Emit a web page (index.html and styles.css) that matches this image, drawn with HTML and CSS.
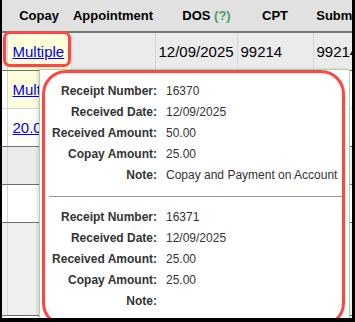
FILE: index.html
```html
<!DOCTYPE html>
<html lang="en">
<head>
    <meta charset="UTF-8">
    <title>Copay Receipts</title>
    <link rel="stylesheet" href="styles.css">
</head>
<body>
    <div class="frame">
        <table class="grid">
            <colgroup>
                <col class="c-gutter">
                <col class="c-copay">
                <col class="c-appt">
                <col class="c-dos">
                <col class="c-cpt">
                <col class="c-sub">
            </colgroup>
            <thead>
                <tr>
                    <th class="gutter"></th>
                    <th>Copay</th>
                    <th>Appointment</th>
                    <th class="dos">DOS <span class="hint">(?)</span></th>
                    <th>CPT</th>
                    <th>Submitted</th>
                </tr>
            </thead>
            <tbody>
                <tr class="shaded">
                    <td class="gutter"></td>
                    <td class="copay"><a href="#">Multiple</a></td>
                    <td></td>
                    <td>12/09/2025</td>
                    <td>99214</td>
                    <td>99214</td>
                </tr>
                <tr class="soft">
                    <td class="gutter"></td>
                    <td class="copay"><a href="#">Multiple</a></td>
                    <td></td>
                    <td></td>
                    <td></td>
                    <td></td>
                </tr>
                <tr>
                    <td class="gutter"></td>
                    <td><a href="#">20.00</a></td>
                    <td></td>
                    <td></td>
                    <td></td>
                    <td></td>
                </tr>
                <tr class="shaded">
                    <td class="gutter"></td>
                    <td></td>
                    <td></td>
                    <td></td>
                    <td></td>
                    <td></td>
                </tr>
                <tr>
                    <td class="gutter"></td>
                    <td></td>
                    <td></td>
                    <td></td>
                    <td></td>
                    <td></td>
                </tr>
                <tr class="shaded tall">
                    <td class="gutter"></td>
                    <td></td>
                    <td></td>
                    <td></td>
                    <td></td>
                    <td></td>
                </tr>
            </tbody>
        </table>

        <!-- highlight around the clicked link -->
        <div class="mark mark-link"></div>

        <!-- receipts popup -->
        <div class="popup">
            <dl class="receipt">
                <dt>Receipt Number:</dt><dd>16370</dd>
                <dt>Received Date:</dt><dd>12/09/2025</dd>
                <dt>Received Amount:</dt><dd>50.00</dd>
                <dt>Copay Amount:</dt><dd>25.00</dd>
                <dt>Note:</dt><dd>Copay and Payment on Account</dd>
            </dl>
            <hr class="split">
            <dl class="receipt">
                <dt>Receipt Number:</dt><dd>16371</dd>
                <dt>Received Date:</dt><dd>12/09/2025</dd>
                <dt>Received Amount:</dt><dd>25.00</dd>
                <dt>Copay Amount:</dt><dd>25.00</dd>
                <dt>Note:</dt><dd></dd>
            </dl>
            <div class="mark mark-popup"></div>
        </div>
    </div>
</body>
</html>
```

FILE: styles.css
```css
body {
    margin: 0;
    padding: 0;
    background: #ffffff;
    font-family: "Liberation Sans", Arial, sans-serif;
    color: #000;
}

.frame {
    position: relative;
    width: 355px;
    height: 322px;
    box-sizing: border-box;
    border-left: 2px solid #000;
    border-right: 3px solid #000;
    border-bottom: 4px solid #000;
    overflow: hidden;
    background: #fff;
}

/* Grid */
.grid {
    border-collapse: collapse;
    table-layout: fixed;
    width: 381px;
}

.c-gutter { width: 5px; }
.c-copay { width: 64px; }
.c-appt { width: 84px; }
.c-dos { width: 82px; }
.c-cpt { width: 76px; }
.c-sub { width: 70px; }

.grid th {
    height: 31px;
    padding: 0;
    background: #e1e1e1;
    border-bottom: 2px solid #777;
    font-size: 13px;
    font-weight: 700;
    text-align: center;
    white-space: nowrap;
    overflow: hidden;
}

.grid th.dos {
    padding-left: 21px;
}

.hint {
    color: #4f9a63;
}

.grid td {
    height: 37px;
    padding: 0 0 0 3px;
    border-bottom: 1px solid #6e6e6e;
    border-right: 1px solid #d6d6d6;
    font-size: 15px;
    white-space: nowrap;
    overflow: hidden;
}

.grid td.gutter {
    padding: 0;
}

.grid tr.soft td {
    border-bottom-color: #d6d6d6;
}

.grid tr.shaded td {
    background: #ebebeb;
}

.grid tr.tall td {
    height: 92px;
    background: #efefef;
}

.grid td.copay {
    background: #ffffdc;
}

.grid tr.shaded td.copay {
    background: #ffffdc;
}

.grid a {
    color: #0000ee;
    padding-left: 2px;
}

/* Popup */
.popup {
    position: absolute;
    left: 37px;
    top: 69px;
    width: 309px;
    height: 247px;
    padding-top: 11px;
    background: #fff;
    border: 1px solid #a9d49a;
    box-shadow: -2px 0 3px rgba(0, 0, 0, 0.12);
}

.receipt {
    display: grid;
    grid-template-columns: 108px 1fr;
    column-gap: 9px;
    margin: 0;
    padding-left: 9px;
    font-size: 12px;
    line-height: 21px;
    color: #333;
}

.receipt dt {
    font-weight: 700;
    text-align: right;
    white-space: nowrap;
}

.receipt dd {
    margin: 0;
    white-space: nowrap;
    min-height: 21px;
}

.split {
    margin: 10px 7px 10px 9px;
    border: 0;
    border-top: 1px solid #9a9a9a;
    height: 0;
}

/* Red highlight marks */
.mark {
    position: absolute;
    border: 3px solid #ff4646;
    box-sizing: border-box;
    pointer-events: none;
}

.mark-link {
    left: 1px;
    top: 31px;
    width: 68px;
    height: 36px;
    border-radius: 7px;
}

.mark-popup {
    left: 2px;
    top: 0;
    right: 4px;
    bottom: 1px;
    border-radius: 24px;
}
```
